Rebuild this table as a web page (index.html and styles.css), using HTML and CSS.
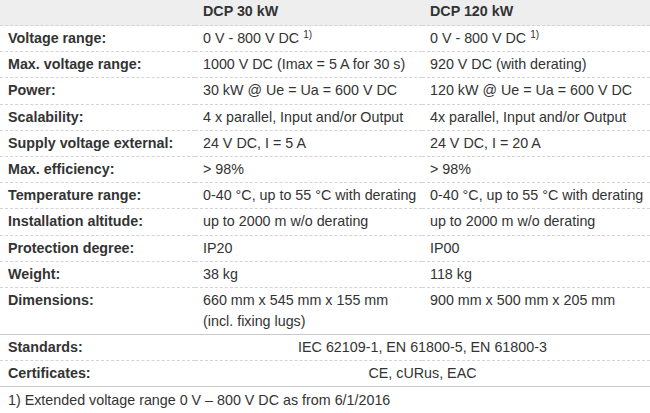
FILE: index.html
```html
<!DOCTYPE html>
<html>
<head>
<meta charset="utf-8">
<link rel="stylesheet" href="styles.css">
</head>
<body>
<table class="spec">
  <colgroup>
    <col class="c1"><col class="c2"><col class="c3">
  </colgroup>
  <thead>
    <tr class="head"><th></th><th>DCP 30 kW</th><th>DCP 120 kW</th></tr>
  </thead>
  <tbody>
    <tr><th>Voltage range:</th><td>0 V - 800 V DC <sup>1)</sup></td><td>0 V - 800 V DC <sup>1)</sup></td></tr>
    <tr><th>Max. voltage range:</th><td>1000 V DC (Imax = 5 A for 30 s)</td><td>920 V DC (with derating)</td></tr>
    <tr><th>Power:</th><td>30 kW @ Ue = Ua = 600 V DC</td><td>120 kW @ Ue = Ua = 600 V DC</td></tr>
    <tr><th>Scalability:</th><td>4 x parallel, Input and/or Output</td><td>4x parallel, Input and/or Output</td></tr>
    <tr><th>Supply voltage external:</th><td>24 V DC, I = 5 A</td><td>24 V DC, I = 20 A</td></tr>
    <tr><th>Max. efficiency:</th><td>&gt; 98%</td><td>&gt; 98%</td></tr>
    <tr><th>Temperature range:</th><td>0-40 °C, up to 55 °C with derating</td><td>0-40 °C, up to 55 °C with derating</td></tr>
    <tr><th>Installation altitude:</th><td>up to 2000 m w/o derating</td><td>up to 2000 m w/o derating</td></tr>
    <tr><th>Protection degree:</th><td>IP20</td><td>IP00</td></tr>
    <tr><th>Weight:</th><td>38 kg</td><td>118 kg</td></tr>
    <tr class="solid"><th>Dimensions:</th><td>660 mm x 545 mm x 155 mm<br>(incl. fixing lugs)</td><td>900 mm x 500 mm x 205 mm</td></tr>
    <tr><th>Standards:</th><td colspan="2" class="center">IEC 62109-1, EN 61800-5, EN 61800-3</td></tr>
    <tr class="solid"><th>Certificates:</th><td colspan="2" class="center">CE, cURus, EAC</td></tr>
    <tr><td colspan="3" class="note">1) Extended voltage range 0 V – 800 V DC as from 6/1/2016</td></tr>
  </tbody>
</table>
</body>
</html>
```

FILE: styles.css
```css
html, body {
  margin: 0;
  padding: 0;
  background: #ffffff;
}
body {
  font-family: "Liberation Sans", Arial, sans-serif;
  font-size: 14.3px;
  color: #333333;
}
.spec {
  width: 650px;
  border-collapse: collapse;
  table-layout: fixed;
}
.c1 { width: 195px; }
.c2 { width: 227px; }
.c3 { width: 228px; }
.spec th, .spec td {
  text-align: left;
  vertical-align: top;
  padding: 2.1px 8px;
  line-height: 21px;
  border-bottom: 1px dashed #d4d4d4;
  white-space: nowrap;
}
.spec th {
  font-weight: bold;
}
.head th {
  background: #eeeeee;
  padding-top: 1px;
  padding-bottom: 3px;
  border-bottom: 1px dashed #d4d4d4;
}
.solid th, .solid td {
  border-bottom: 1px solid #c8c8c8;
}
.spec td.center {
  text-align: center;
}
.spec td.note {
  padding-left: 8px;
}
sup {
  font-size: 10px;
  line-height: 0;
  vertical-align: 5px;
}
```
